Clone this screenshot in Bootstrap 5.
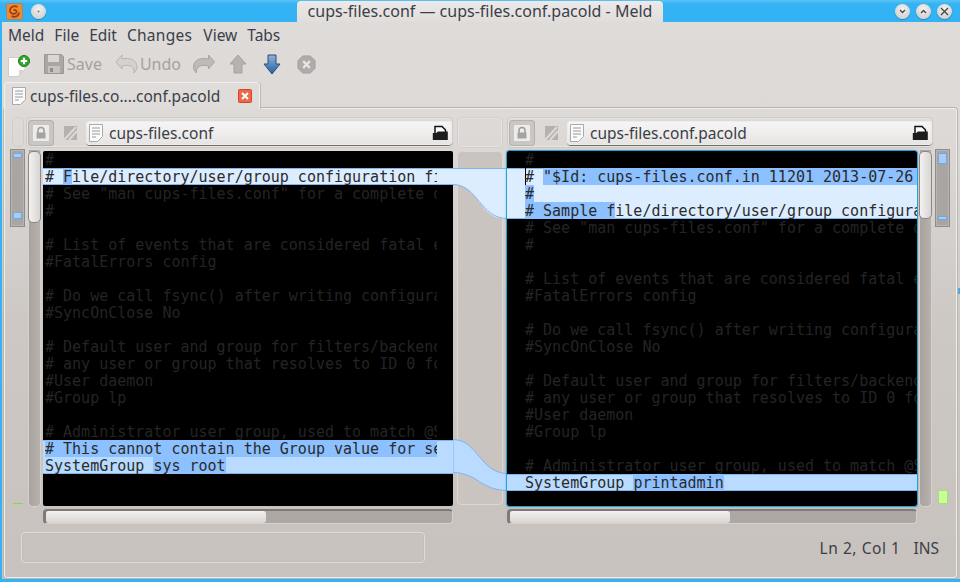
<!DOCTYPE html>
<html lang="en"><head><meta charset="utf-8"><title>Meld</title>
<link href="https://cdn.jsdelivr.net/npm/bootstrap@5.3.0/dist/css/bootstrap.min.css" rel="stylesheet">
<style>
html,body{height:100%;overflow:hidden}
body{background:#33b3f3;font-family:"Noto Sans","Open Sans",sans-serif;font-size:15px;color:#3b3f49;line-height:20px}
.shell{width:960px;height:582px;display:flex;flex-direction:column;padding:0 0 3px 2px;position:relative}
.grip{position:absolute;right:0;top:288px;width:2px;height:6px;background:#5aa7d8}
.titlebar{height:22px;margin-left:-2px;flex:none;position:relative;padding:0 6px 0 6px;background:linear-gradient(#5cc2f6,#33b3f3 4px)}
.title-tab{position:absolute;left:297px;width:366px;top:1px;height:21px;background:linear-gradient(#eceae8,#e0dddb);border-radius:4px 4px 0 0;text-align:center;line-height:20px;color:#3b3f49;font-size:16px}
.winbtn{width:15px;height:15px;border-radius:50%;background:radial-gradient(circle at 50% 35%,#f4f3f2,#c9c6c4);box-shadow:0 1px 1px #2a86b8;display:flex;align-items:center;justify-content:center}
.client{flex:1;display:flex;flex-direction:column;background:linear-gradient(#dedbd9 0,#dcd9d7 110px,#cdc8c4 300px,#c7c2be 100%);min-height:0}
.menubar{height:26px;flex:none;display:flex;align-items:center;gap:10px;padding-left:6px;font-size:15.5px;color:#3b3f49}
.wide-word{letter-spacing:.3px;margin-right:1px}
.toolbar{height:32px;flex:none;display:flex;align-items:center;padding-left:4px}
.tool{display:flex;align-items:center;gap:2px;color:#a5a2a0;font-size:16px}
.tabstrip{height:27px;margin-top:2px;flex:none;padding-left:2px;display:flex;align-items:flex-end;position:relative;z-index:2}
.doc-tab{height:27px;width:256px;background:#dfdcda;border:1px solid #f1efee;border-bottom:0;border-radius:4px 4px 0 0;display:flex;align-items:center;padding:0 0 0 7px;gap:4px;font-size:15.5px;box-shadow:1px 0 0 #bbb7b4}
.page{flex:1;margin:-1px 3px 1px 2px;border:1px solid #f0eeed;border-radius:3px;box-shadow:0 0 0 1px #b9b5b2;display:flex;flex-direction:column;padding:8px 0 0 5px;min-height:0}
.panes{display:grid;grid-template-columns:17px 16px 410px 54px 410px 18px 16px;grid-template-rows:33px 357px 18px}
.slot{width:12px;height:30px;margin:0 0 0 2px;border:1px solid #cfccc9;border-radius:5px}
.head{display:flex;align-items:center;height:31px;border:1px solid #cdc9c6;border-radius:4px;box-shadow:inset 0 0 0 1px #e7e5e3;padding:0 0 0 1px}
.lockbtn{width:26px;height:26px;border-radius:4px;background:#c9c6c3;box-shadow:inset 0 0 0 1px #b5b1ae;display:flex;align-items:center;justify-content:center;flex:none}
.edit-ic{width:32px;display:flex;justify-content:center;flex:none}
.entry{flex:1;height:24px;background:linear-gradient(#f7f6f6,#e6e4e2);border-radius:4px;box-shadow:0 1px 0 #6f6c6a,inset 0 0 0 1px #eeecea;display:flex;align-items:center;padding:0 3px 0 3px;gap:2px;font-size:15.5px}
.gap-box{margin:0 4px;height:31px;border:1px solid #d2cfcc;border-radius:4px;box-shadow:inset 0 0 0 1px #e4e2e0}
.over{position:relative;width:15px;background:#a8a5a2;border:1px solid #8f8c8a;box-shadow:inset 0 0 0 1px #b8b5b2;height:78px;margin-top:-1px}
.over i{position:absolute;left:2px;right:2px;background:#a7cdf2;border:1px solid #6ea9e6;display:block}
.over b{position:absolute;left:2px;width:10px;display:block;background:#88dd33;height:1px;top:353px}
.over u{position:absolute;left:2px;width:10px;display:block;background:#c9ff99;border:1px solid #a8dd70;height:14px;top:340px}
.vtrack{width:13px;margin-left:1px;background:linear-gradient(90deg,#a9a3a0,#b7b1ae);border:1px solid #d4d1ce;border-top:0;border-radius:0 0 5px 5px;position:relative;height:357px}
.vthumb{position:absolute;left:-1px;right:-1px;top:1px;background:linear-gradient(90deg,#f3f2f1,#d8d5d3);border:1px solid #8b8784;border-radius:5px}
.code{background:#000;overflow:hidden;font-family:"DejaVu Sans Mono",monospace;font-size:15px;line-height:17px;color:#242424;height:355px;border-radius:2px;margin-top:1px}
.code.focused{outline:1px solid #2b9fd3;box-shadow:0 0 3px #2b9fd3}
.ln{height:17px;display:block;overflow:hidden;white-space:pre}
.lft .ln{padding-left:2px}
.lft .clip{display:block;overflow:hidden;margin-right:16px}
.rgt .ln{padding-left:18px}
.ln>*,.ln{line-height:19px}
.pale{background:#dcedff;color:#2b2b2b}
.sky{background:#b8dbff;color:#2b2b2b}
.top-edge{box-shadow:inset 0 1px 0 #7fb5ea}
.bot-edge{box-shadow:inset 0 -1px 0 #7fb5ea}
.both-edge{box-shadow:inset 0 1px 0 #7fb5ea,inset 0 -1px 0 #7fb5ea}
.hot{background:#8cc0ff}
.caret{box-shadow:inset 1px 0 0 #000}
.gutter svg{display:block}
.htrack{height:15px;margin-top:2px;background:#aea8a5;border:1px solid #d4d1ce;border-left:3px solid #7f7a77;border-top:2px solid #7f7a77;border-radius:4px;position:relative;box-sizing:border-box}
.hthumb{position:absolute;left:0;top:0;bottom:0;width:220px;background:linear-gradient(#f2f1f0,#d8d5d3);border-radius:3px}
.statusrow{display:flex;align-items:center;height:30px;margin-top:7px;padding-left:11px}
.msgbox{width:404px;height:31px;border:1px solid #dedbd9;border-radius:4px;box-shadow:inset 0 0 0 1px #c3bebb}
.stat-txt{margin-left:auto;padding-right:17px;padding-top:1px;display:flex;gap:13px;font-size:15.5px;white-space:pre}
.stat-first{letter-spacing:.55px}
</style></head><body>
<div class="shell">
 <div class="grip"></div>
 <div class="titlebar d-flex align-items-center gap-1">
  <svg width="17" height="17" viewBox="0 0 17 17"><rect x=".5" y=".5" width="16" height="16" rx="1.500" fill="#ef8a2e" stroke="#8f8a86"/><path d="M11.500 4C8 2 4 4 4 7.500s4 4 6 2.500-1-4-2.500-2.500M5.500 13c3.500 2 7.500 0 7.500-3.500" fill="none" stroke="#9a3d10" stroke-width="1.600"/></svg>
  <div class="winbtn ms-1"><svg width="3" height="3"><circle cx="1.500" cy="1.500" r="1" fill="#777"/></svg></div>
  <div class="title-tab">cups-files.conf — cups-files.conf.pacold - Meld</div>
  <div class="ms-auto d-flex" style="gap:6px;padding-right:2px">
   <div class="winbtn"><svg width="9" height="9" viewBox="0 0 9 9"><path d="M2 3l2.500 2.500L7 3" fill="none" stroke="#444" stroke-width="1.300"/></svg></div>
   <div class="winbtn"><svg width="9" height="9" viewBox="0 0 9 9"><path d="M2 6l2.500-2.500L7 6" fill="none" stroke="#444" stroke-width="1.300"/></svg></div>
   <div class="winbtn"><svg width="9" height="9" viewBox="0 0 9 9"><path d="M1 1l7 7M8 1l-7 7" fill="none" stroke="#444" stroke-width="1.300"/></svg></div>
  </div>
 </div>
 <div class="client">
  <div class="menubar"><span>Meld</span><span>File</span><span>Edit</span><span class="wide-word">Changes</span><span>View</span><span>Tabs</span></div>
  <div class="toolbar">
   <svg width="25" height="28" viewBox="0 0 25 28"><path d="M2.500 7.500h16.500v12l-7 7h-9.500z" fill="#fdfdfd" stroke="#cfccca"/><path d="M19 20h-6v6z" fill="#d8d6d4"/><circle cx="18" cy="11" r="5.500" fill="#2fa52b" stroke="#1f7a1d"/><path d="M18 7.800v6.400M14.800 11h6.400" stroke="#fff" stroke-width="2.200"/></svg>
   <div class="tool" style="margin-left:12px"><svg width="22" height="22" viewBox="0 0 22 22"><path d="M1.500 1.500h17l2 2v17h-19z" fill="#a9a6a4" stroke="#9b9896"/><path d="M5 2h11v7H5z" fill="#dad8d6"/><path d="M5 13h12v7H5z" fill="#c6c4c2"/><path d="M7 15h3v4H7z" fill="#8f8c8a"/></svg><span>Save</span></div>
   <div class="tool" style="margin-left:13px"><svg width="23" height="20" viewBox="0 0 23 20"><path d="M1 8l6-7v4c8-2 15 1 15 8 0 2-1 4-3 6 1-6-4-9-12-7v3z" fill="#d4d2d0" stroke="#b8b5b3"/></svg><span>Undo</span></div>
   <div class="tool" style="margin-left:11px"><svg width="24" height="20" viewBox="0 0 23 20"><path d="M22 8l-6-7v4C8 3 1 6 1 13c0 2 1 4 3 6-1-6 4-9 12-7v3z" fill="#bdbab8" stroke="#a8a5a3"/></svg></div>
   <div class="tool" style="margin-left:13px"><svg width="18" height="22" viewBox="0 0 18 22"><path d="M9 2l8 9h-4v9H5v-9H1z" fill="#b5b3b1" stroke="#a5a2a0"/></svg></div>
   <div class="tool" style="margin-left:16px"><svg width="18" height="22" viewBox="0 0 18 22"><defs><linearGradient id="dn" x1="0" y1="0" x2="0" y2="1"><stop offset="0" stop-color="#8fb2dc"/><stop offset="1" stop-color="#2a5e9e"/></linearGradient></defs><path d="M5 2h8v9h4l-8 10-8-10h4z" fill="url(#dn)" stroke="#26507f"/></svg></div>
   <div class="tool" style="margin-left:16px"><svg width="19" height="19" viewBox="0 0 20 20"><path d="M6 1h8l5 5v8l-5 5H6l-5-5V6z" fill="#aeacaa" stroke="#a3a09e"/><path d="M6.500 6.500l7 7M13.500 6.500l-7 7" stroke="#e7e5e4" stroke-width="2.400"/></svg></div>
  </div>
  <div class="tabstrip">
   <div class="doc-tab">
    <svg width="14" height="18" viewBox="0 0 14 18"><path d="M.5 .5h13v12l-5 5h-8z" fill="#fbfbfb" stroke="#aaa"/><path d="M3 4h8M3 7h8M3 10h8M3 13h4" stroke="#9a9a9a"/></svg>
    <span>cups-files.co....conf.pacold</span>
    <svg style="margin-left:14px" width="14" height="14" viewBox="0 0 14 14"><rect x=".5" y=".5" width="13" height="13" rx="1" fill="#e86a4a" stroke="#d8402c"/><path d="M4 4l6 6M10 4l-6 6" stroke="#fff" stroke-width="2"/></svg>
   </div>
  </div>
  <div class="page">
   <div class="panes">
    <div><div class="slot"></div></div>
    <div class="head" style="grid-column:span 2;margin-left:-1px">
     <div class="lockbtn"><svg width="18" height="18" viewBox="0 0 18 18"><rect x="1" y="1" width="16" height="16" rx="1" fill="#eeecea"/><path d="M6 9V6.500a3 3 0 0 1 6 0V9" fill="none" stroke="#9d9a98" stroke-width="1.500"/><rect x="4.500" y="8.500" width="9" height="6" fill="#a5a2a0"/></svg></div>
     <div class="edit-ic"><svg width="15" height="16" viewBox="0 0 15 16"><rect x="1" y="1" width="13" height="14" fill="#b4b1af"/><path d="M1 15L13 2M6 15L14 6" stroke="#dcdad8" stroke-width="2"/></svg></div>
     <div class="entry"><svg width="14" height="18" viewBox="0 0 14 18"><path d="M.5 .5h13v12l-5 5h-8z" fill="#fbfbfb" stroke="#aaa"/><path d="M3 4h8M3 7h8M3 10h8M3 13h4" stroke="#9a9a9a"/></svg><span class="ms-1">cups-files.conf</span>
      <svg class="ms-auto" width="17" height="16" viewBox="0 0 17 16"><path d="M3 9V1.500h7l3.500 3.500V9" fill="#fff" stroke="#111" stroke-width="1.500"/><path d="M.8 15V8h3.500l1.500-1.500h10V15z" fill="#1c1c1c"/></svg></div>
    </div>
    <div class="gap-box"></div>
    <div class="head" style="margin-right:-16px">
     <div class="lockbtn"><svg width="18" height="18" viewBox="0 0 18 18"><rect x="1" y="1" width="16" height="16" rx="1" fill="#eeecea"/><path d="M6 9V6.500a3 3 0 0 1 6 0V9" fill="none" stroke="#9d9a98" stroke-width="1.500"/><rect x="4.500" y="8.500" width="9" height="6" fill="#a5a2a0"/></svg></div>
     <div class="edit-ic"><svg width="15" height="16" viewBox="0 0 15 16"><rect x="1" y="1" width="13" height="14" fill="#b4b1af"/><path d="M1 15L13 2M6 15L14 6" stroke="#dcdad8" stroke-width="2"/></svg></div>
     <div class="entry"><svg width="14" height="18" viewBox="0 0 14 18"><path d="M.5 .5h13v12l-5 5h-8z" fill="#fbfbfb" stroke="#aaa"/><path d="M3 4h8M3 7h8M3 10h8M3 13h4" stroke="#9a9a9a"/></svg><span class="ms-1">cups-files.conf.pacold</span>
      <svg class="ms-auto" width="17" height="16" viewBox="0 0 17 16"><path d="M3 9V1.500h7l3.500 3.500V9" fill="#fff" stroke="#111" stroke-width="1.500"/><path d="M.8 15V8h3.500l1.500-1.500h10V15z" fill="#1c1c1c"/></svg></div>
    </div>
    <div></div><div></div>

    <div class="over"><i style="top:3px;height:5px"></i><i style="top:62px;height:7px"></i><b></b></div>
    <div><div class="vtrack"><div class="vthumb" style="height:72px"></div></div></div>
    <div class="code lft">
<span class="ln">#</span>
<span class="ln pale both-edge"><span class="clip"># <span class="hot">F</span>ile/directory/user/group configuration file for the CUPS scheduler.</span></span>
<span class="ln"><span class="clip"># See "man cups-files.conf" for a complete description of this file.</span></span>
<span class="ln">#</span>
<span class="ln"> </span>
<span class="ln"><span class="clip"># List of events that are considered fatal errors for the scheduler...</span></span>
<span class="ln">#FatalErrors config</span>
<span class="ln"> </span>
<span class="ln"><span class="clip"># Do we call fsync() after writing configuration or status files?</span></span>
<span class="ln">#SyncOnClose No</span>
<span class="ln"> </span>
<span class="ln"><span class="clip"># Default user and group for filters/backends/helper programs; this cannot be</span></span>
<span class="ln"><span class="clip"># any user or group that resolves to ID 0 for security reasons...</span></span>
<span class="ln">#User daemon</span>
<span class="ln">#Group lp</span>
<span class="ln"> </span>
<span class="ln"><span class="clip"># Administrator user group, used to match @SYSTEM in cupsd.conf policy rules...</span></span>
<span class="ln sky top-edge"><span class="clip hot"># This cannot contain the Group value for security reasons...</span></span>
<span class="ln sky bot-edge">SystemGroup <span class="hot">sys root</span></span>
</div>
    <div class="gutter"><svg width="54" height="357" viewBox="453 150 54 357"><rect x="457.500" y="151.500" width="45" height="353" rx="4" fill="#c9c4c0" stroke="#dbd8d6"/>
<path d="M453 168.500H507V218.500H503C480 218 478 185 453 184.500Z" fill="#dcedff"/><path d="M453 168.500H507" stroke="#7fb5ea" fill="none"/><path d="M453 184.500C478 185 480 218 507 218.500" stroke="#7fb5ea" fill="none"/>
<path d="M453 439.500C478 440 480 473 507 473.500V490.500C480 490 478 473 453 472.500Z" fill="#b8dbff" stroke="#7fb5ea"/></svg></div>
    <div class="code rgt focused">
<span class="ln">#</span>
<span class="ln pale top-edge"><span class="caret"># </span><span class="hot">"$Id: cups-files.conf.in 11201 2013-07-26 21:27:27Z msweet $"</span></span>
<span class="ln pale"><span class="hot">#</span></span>
<span class="ln pale bot-edge"><span class="hot"># Sample f</span>ile/directory/user/group configuration file for the CUPS scheduler.</span>
<span class="ln"># See "man cups-files.conf" for a complete description of this file.</span>
<span class="ln">#</span>
<span class="ln"> </span>
<span class="ln"># List of events that are considered fatal errors for the scheduler...</span>
<span class="ln">#FatalErrors config</span>
<span class="ln"> </span>
<span class="ln"># Do we call fsync() after writing configuration or status files?</span>
<span class="ln">#SyncOnClose No</span>
<span class="ln"> </span>
<span class="ln"># Default user and group for filters/backends/helper programs; this cannot be</span>
<span class="ln"># any user or group that resolves to ID 0 for security reasons...</span>
<span class="ln">#User daemon</span>
<span class="ln">#Group lp</span>
<span class="ln"> </span>
<span class="ln"># Administrator user group, used to match @SYSTEM in cupsd.conf policy rules...</span>
<span class="ln sky both-edge">SystemGroup <span class="hot">printadmin</span></span>
</div>
    <div class="d-flex justify-content-end"><div class="vtrack" style="margin-right:3px"><div class="vthumb" style="height:68px"></div></div></div>
    <div class="over"><i style="top:3px;height:11px"></i><i style="top:66px;height:4px"></i><u></u></div>

    <div></div><div></div>
    <div><div class="htrack"><div class="hthumb"></div></div></div>
    <div></div>
    <div><div class="htrack"><div class="hthumb"></div></div></div>
    <div></div><div></div>
   </div>
   <div class="statusrow"><div class="msgbox"></div><div class="stat-txt"><span class="stat-first">Ln 2, Col 1</span><span>INS</span></div></div>
  </div>
 </div>
</div>
</body></html>
